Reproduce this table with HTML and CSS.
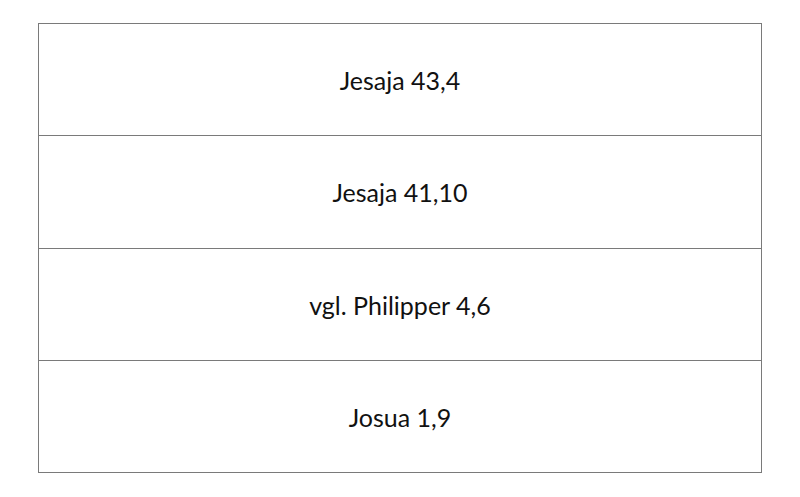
FILE: index.html
```html
<!DOCTYPE html>
<html>
<head>
<meta charset="utf-8">
<link rel="stylesheet" href="styles.css">
</head>
<body>
<table class="refs">
  <tr><td>Jesaja 43,4</td></tr>
  <tr><td class="tall">Jesaja 41,10</td></tr>
  <tr><td>vgl. Philipper 4,6</td></tr>
  <tr><td>Josua 1,9</td></tr>
</table>
</body>
</html>
```
FILE: styles.css
```css
html, body {
  margin: 0;
  padding: 0;
  background: #fff;
}
body {
  padding: 23px 0 0 38px;
}
.refs {
  border-collapse: collapse;
  width: 724px;
  font-family: Lato, "Open Sans", sans-serif;
  font-size: 25px;
  color: #111;
}
.refs td {
  border: 1px solid #7a7a7a;
  height: 111px;
  padding: 0;
  text-align: center;
  vertical-align: middle;
}
.refs td.tall {
  height: 112px;
}
```
